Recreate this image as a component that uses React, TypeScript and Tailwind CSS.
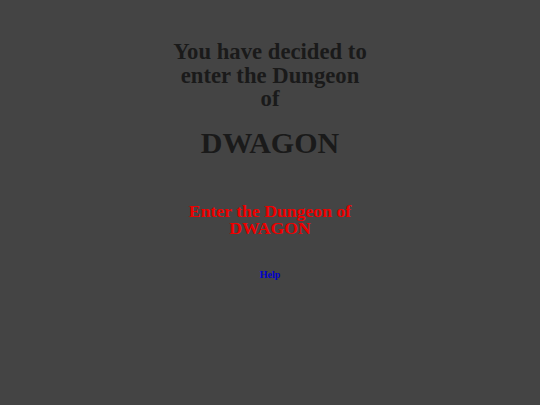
export default function App() {
  return (
    <div className="min-h-[405px] bg-[#444444] flex flex-col items-center pt-[40px] font-['Liberation_Serif',serif] font-bold text-center">
      <h2 className="w-[200px] text-[22.7px] leading-[23.5px] text-[#1a1a1a]">
        You have decided to enter the Dungeon of
      </h2>
      <h1 className="mt-[14px] text-[30px] leading-[35px] text-[#1a1a1a]">DWAGON</h1>
      <a href="#" className="mt-[43px] w-[180px] text-[17.7px] leading-[17px] text-[#ee0000]">
        Enter the Dungeon of DWAGON
      </a>
      <a href="#" className="mt-[32px] text-[10px] leading-[12px] text-[#0000cc]">
        Help
      </a>
    </div>
  );
}
